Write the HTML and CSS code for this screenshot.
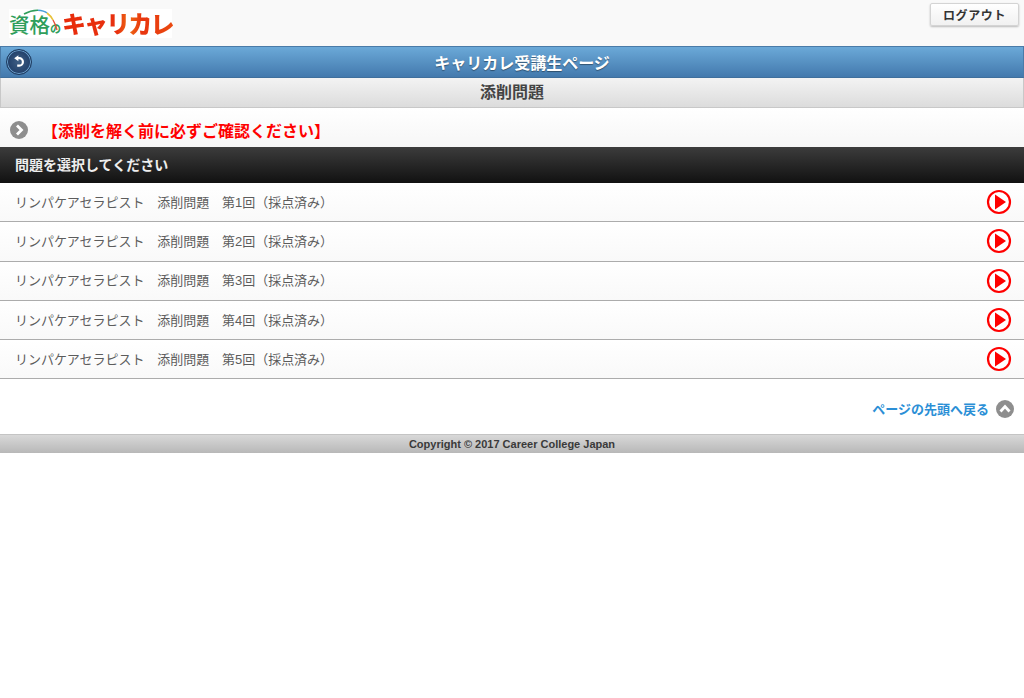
FILE: index.html
```html
<!DOCTYPE html>
<html lang="ja">
  <head>
    <meta charset="UTF-8" />
    <title>キャリカレ受講生ページ</title>
    <link rel="stylesheet" href="styles.css">
  </head>
  <body>
    <header class="site-header">
      <div class="logo">
        <svg class="logo-arc" width="50" height="24" viewBox="0 0 50 24" aria-hidden="true">
          <path d="M15 5 Q22 1 29 1.2" fill="none" stroke="#2f9e5b" stroke-width="1.6" />
          <path d="M29 1.2 Q35 1.6 38 4" fill="none" stroke="#4a9fd8" stroke-width="1.6" />
          <path d="M38 4 Q42 7 44 11" fill="none" stroke="#e8c23a" stroke-width="1.6" />
          <path d="M44 11 Q47 16 48 21" fill="none" stroke="#e8503a" stroke-width="1.4" />
        </svg>
        <span class="logo-sub">資格</span><span class="logo-no">の</span><span class="logo-main">キャリカレ</span>
      </div>
      <button class="logout-btn">ログアウト</button>
    </header>

    <div class="title-bar">
      <span class="back-btn">
        <svg width="14" height="14" viewBox="0 0 14 14" aria-hidden="true">
          <path d="M5.6 3.2 H7.2 A3.6 3.6 0 0 1 7.2 10.6 H5.2" fill="none" stroke="#fff" stroke-width="2.2" />
          <path d="M6.4 0.2 L2.2 3.2 L6.4 6.2 Z" fill="#fff" />
        </svg>
      </span>
      <h1>キャリカレ受講生ページ</h1>
    </div>
    <div class="sub-bar">添削問題</div>

    <main>
      <div class="notice">
        <span class="round-icon notice-icon">
          <svg width="12" height="12" viewBox="0 0 12 12" aria-hidden="true">
            <path d="M4 1.5 L8.5 6 L4 10.5" fill="none" stroke="#fff" stroke-width="2.8" />
          </svg>
        </span>
        <a class="notice-link">【添削を解く前に必ずご確認ください】</a>
      </div>

      <div class="list-head">問題を選択してください</div>
      <ul class="list">
        <li>
          <span>リンパケアセラピスト　添削問題　第1回（採点済み）</span>
          <svg class="play" width="26" height="26" viewBox="0 0 26 26" aria-hidden="true"><circle cx="13" cy="13" r="11" fill="#fff" stroke="#f00" stroke-width="2.2" /><path d="M9 5.5 L20 13 L9 20.5 Z" fill="#f00" /></svg>
        </li>
        <li>
          <span>リンパケアセラピスト　添削問題　第2回（採点済み）</span>
          <svg class="play" width="26" height="26" viewBox="0 0 26 26" aria-hidden="true"><circle cx="13" cy="13" r="11" fill="#fff" stroke="#f00" stroke-width="2.2" /><path d="M9 5.5 L20 13 L9 20.5 Z" fill="#f00" /></svg>
        </li>
        <li>
          <span>リンパケアセラピスト　添削問題　第3回（採点済み）</span>
          <svg class="play" width="26" height="26" viewBox="0 0 26 26" aria-hidden="true"><circle cx="13" cy="13" r="11" fill="#fff" stroke="#f00" stroke-width="2.2" /><path d="M9 5.5 L20 13 L9 20.5 Z" fill="#f00" /></svg>
        </li>
        <li>
          <span>リンパケアセラピスト　添削問題　第4回（採点済み）</span>
          <svg class="play" width="26" height="26" viewBox="0 0 26 26" aria-hidden="true"><circle cx="13" cy="13" r="11" fill="#fff" stroke="#f00" stroke-width="2.2" /><path d="M9 5.5 L20 13 L9 20.5 Z" fill="#f00" /></svg>
        </li>
        <li>
          <span>リンパケアセラピスト　添削問題　第5回（採点済み）</span>
          <svg class="play" width="26" height="26" viewBox="0 0 26 26" aria-hidden="true"><circle cx="13" cy="13" r="11" fill="#fff" stroke="#f00" stroke-width="2.2" /><path d="M9 5.5 L20 13 L9 20.5 Z" fill="#f00" /></svg>
        </li>
      </ul>

      <div class="back-top">
        <a>ページの先頭へ戻る</a>
        <span class="round-icon top-icon">
          <svg width="12" height="12" viewBox="0 0 12 12" aria-hidden="true">
            <path d="M1.5 8.5 L6 3.5 L10.5 8.5" fill="none" stroke="#fff" stroke-width="2.8" />
          </svg>
        </span>
      </div>
    </main>

    <footer>Copyright © 2017 Career College Japan</footer>
  </body>
</html>
```

FILE: styles.css
```css
* {
  margin: 0;
  padding: 0;
  box-sizing: border-box;
}

body {
  font-family: "Liberation Sans", "Noto Sans CJK JP", sans-serif;
  color: #333;
  background: #fff;
}

.site-header {
  height: 46px;
  background: #f9f9f9;
  display: flex;
  justify-content: space-between;
  align-items: flex-start;
  padding: 3px 5px 0 9px;
}

.logo {
  position: relative;
  display: flex;
  align-items: baseline;
  width: 163px;
  height: 29px;
  margin-top: 6px;
  background: #fff;
  white-space: nowrap;
  font-family: "Noto Sans CJK JP", sans-serif;
}

.logo-arc {
  position: absolute;
  left: 0;
  top: 0;
}

.logo-sub {
  font-size: 20.5px;
  line-height: 31px;
  color: #2f9e5b;
  font-weight: 500;
}

.logo-no {
  font-size: 11px;
  color: #2f9e5b;
  font-weight: 700;
  margin-right: 1px;
}

.logo-main {
  font-size: 24px;
  line-height: 28px;
  font-weight: 900;
  letter-spacing: -1.9px;
  background: linear-gradient(90deg, #e82c0c, #e8300e 50%, #ee6a14 60%, #e8340e 72%, #ea4a10 100%);
  -webkit-background-clip: text;
  background-clip: text;
  color: transparent;
}

.logout-btn {
  width: 89px;
  height: 23px;
  font-family: inherit;
  font-size: 12px;
  font-weight: 700;
  letter-spacing: 0.6px;
  color: #333;
  background: linear-gradient(#fff, #f1f1f1);
  border: 1px solid #d4d4d4;
  border-radius: 2px;
  box-shadow: 0 1px 2px rgba(0, 0, 0, 0.25);
}

.title-bar {
  position: relative;
  height: 32px;
  background: linear-gradient(#6ba9d8, #4379ad);
  border: 1px solid #4a7ba8;
  border-bottom-color: #3f6f9c;
  display: flex;
  align-items: center;
  justify-content: center;
  padding-left: 20px;
}

.title-bar h1 {
  font-size: 16px;
  font-weight: 700;
  color: #fff;
  text-shadow: 0 1px 1px rgba(0, 0, 0, 0.4);
}

.back-btn {
  position: absolute;
  left: 5px;
  top: 2px;
  width: 26px;
  height: 26px;
  border-radius: 50%;
  background: radial-gradient(circle, #3f5f85 0%, #22406a 70%);
  border: 1px solid #1e3a5e;
  box-shadow: inset 0 0 0 1px #6ea2cf;
  display: flex;
  align-items: center;
  justify-content: center;
}

.sub-bar {
  height: 30px;
  background: linear-gradient(#f3f3f3, #dcdcdc);
  border: 1px solid #c8c8c8;
  border-top: 0;
  font-size: 16px;
  font-weight: 700;
  line-height: 29px;
  text-align: center;
  color: #444;
}

.notice {
  height: 39px;
  background: linear-gradient(#fff, #f6f6f6);
  display: flex;
  align-items: center;
  gap: 14px;
  padding: 5px 0 0 10px;
}

.notice-link {
  font-size: 16px;
  font-weight: 700;
  color: #f00;
}

.round-icon {
  width: 18px;
  height: 18px;
  border-radius: 50%;
  background: #8e8e8e;
  display: flex;
  align-items: center;
  justify-content: center;
}

.list-head {
  height: 36px;
  background: linear-gradient(#3c3c3c, #111);
  color: #eee;
  font-size: 14px;
  font-weight: 700;
  line-height: 37px;
  padding-left: 15px;
}

.list {
  list-style: none;
}

.list li {
  height: 39.25px;
  background: linear-gradient(#fff, #f9f9f9);
  border-bottom: 1px solid #acacac;
  display: flex;
  justify-content: space-between;
  align-items: center;
  padding: 0 12px 0 15px;
  font-size: 13px;
  letter-spacing: -0.04px;
  color: #5c5c5c;
}

.list li span {
  margin-top: -1.5px;
}

.back-top {
  height: 55px;
  display: flex;
  justify-content: flex-end;
  align-items: center;
  gap: 7px;
  padding: 4px 10px 0 0;
}

.back-top a {
  font-size: 13px;
  font-weight: 700;
  color: #2b8fd6;
}

footer {
  height: 19px;
  background: linear-gradient(#d8d8d8, #b8b8b8);
  border-top: 1px solid #c4c4c4;
  font-size: 11px;
  font-weight: 700;
  line-height: 18px;
  text-align: center;
  color: #3a3a3a;
}
```
